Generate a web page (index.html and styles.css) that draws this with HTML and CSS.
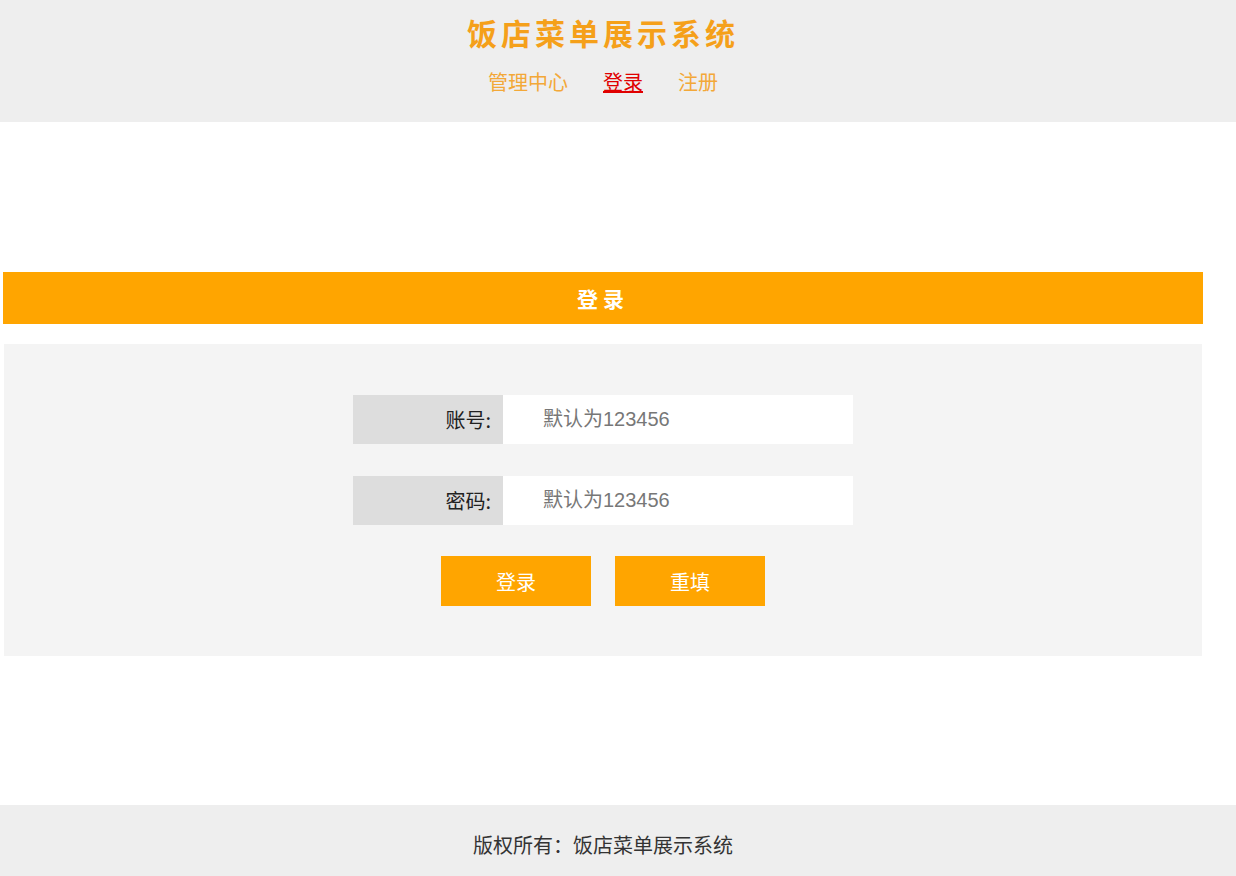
FILE: index.html
```html
<!DOCTYPE html>
<html lang="zh-CN">
<head>
    <meta charset="UTF-8">
    <meta name="viewport" content="width=device-width, initial-scale=1.0">
    <title>饭店菜单展示系统 - 登录</title>
    <link rel="stylesheet" href="styles.css">
</head>
<body>
    <header class="top">
        <div class="wrap">
            <h1 class="title">饭店菜单展示系统</h1>
            <nav class="nav">
                <a href="#">管理中心</a>
                <a href="#" class="current">登录</a>
                <a href="#">注册</a>
            </nav>
        </div>
    </header>

    <main class="wrap">
        <div class="bar">登录</div>
        <div class="panel">
            <form class="login">
                <div class="row">
                    <label class="label" for="user">账号:</label>
                    <input class="field" id="user" type="text" placeholder="默认为123456">
                </div>
                <div class="row">
                    <label class="label" for="pwd">密码:</label>
                    <input class="field" id="pwd" type="password" placeholder="默认为123456">
                </div>
                <div class="actions">
                    <button type="submit" class="btn">登录</button>
                    <button type="reset" class="btn">重填</button>
                </div>
            </form>
        </div>
    </main>

    <footer class="foot">
        <div class="wrap">版权所有：饭店菜单展示系统</div>
    </footer>
</body>
</html>
```

FILE: styles.css
```css
body {
    margin: 0;
    font-family: "Liberation Sans", "Noto Sans CJK SC", sans-serif;
    font-size: 20px;
    color: #333;
    background-color: #fff;
}

.wrap {
    width: 1200px;
    margin-left: 3px;
}

.top {
    height: 122px;
    background-color: #eee;
}

.title {
    margin: 0;
    padding-top: 9px;
    height: 46px;
    line-height: 46px;
    text-align: center;
    font-family: "Noto Sans CJK SC", sans-serif;
    font-size: 30px;
    font-weight: 700;
    letter-spacing: 4px;
    color: #f5a01a;
}

.nav {
    display: flex;
    justify-content: center;
    gap: 35px;
    margin-top: 10px;
    line-height: 34px;
}

.nav a {
    font-family: "Noto Sans CJK SC", sans-serif;
    font-size: 20px;
    color: #f3a838;
    text-decoration: none;
}

.nav a.current {
    color: #e00000;
    text-decoration: underline;
}

main.wrap {
    margin-top: 150px;
}

.bar {
    height: 52px;
    line-height: 52px;
    text-align: center;
    font-family: "Noto Sans CJK SC", sans-serif;
    font-size: 21px;
    font-weight: 700;
    letter-spacing: 5px;
    color: #fff;
    background-color: #ffa500;
}

.panel {
    margin: 20px 1px 0;
    height: 312px;
    box-sizing: border-box;
    padding-top: 51px;
    background-color: #f4f4f4;
}

.login {
    width: 500px;
    margin: 0 auto;
}

.row {
    display: flex;
    height: 49px;
    margin-bottom: 32px;
}

.label {
    width: 150px;
    box-sizing: border-box;
    padding-right: 12px;
    line-height: 49px;
    text-align: right;
    font-family: "Noto Sans CJK SC", sans-serif;
    color: #222;
    background-color: #ddd;
}

.field {
    width: 350px;
    box-sizing: border-box;
    padding: 0 0 0 40px;
    border: none;
    outline: none;
    font-family: "Liberation Sans", "Noto Sans CJK SC", sans-serif;
    font-size: 20px;
    color: #333;
    background-color: #fff;
}

.field::placeholder {
    color: #777;
}

.actions {
    display: flex;
    justify-content: center;
    gap: 24px;
    margin-top: -1px;
}

.btn {
    width: 150px;
    height: 50px;
    border: none;
    cursor: pointer;
    font-family: "Noto Sans CJK SC", sans-serif;
    font-size: 20px;
    color: #fff;
    background-color: #ffa500;
}

.foot {
    margin-top: 149px;
    height: 80px;
    line-height: 80px;
    text-align: center;
    font-family: "Noto Sans CJK SC", sans-serif;
    font-size: 20px;
    color: #333;
    background-color: #eee;
}
```
